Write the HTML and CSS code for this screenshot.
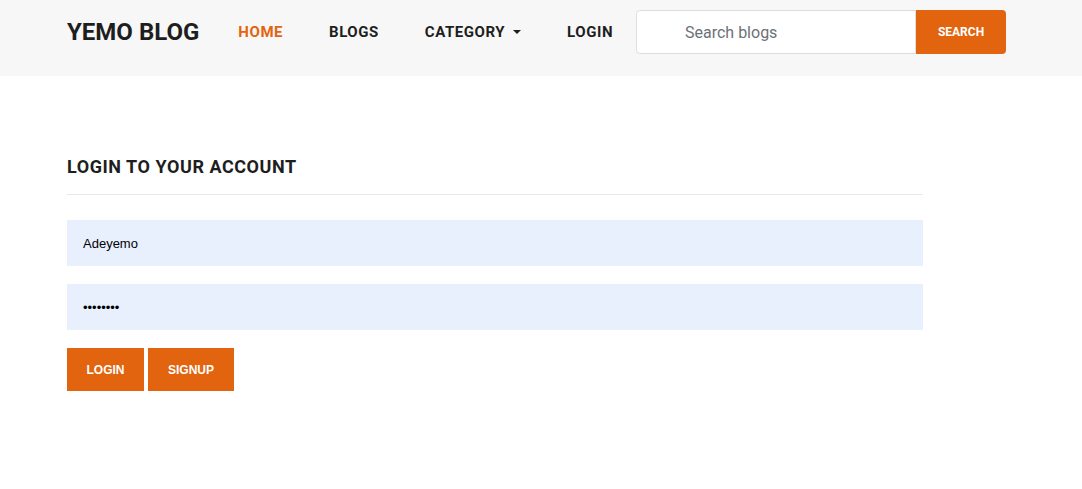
FILE: index.html
```html
<!DOCTYPE html>
<html>
<head>
<meta charset="utf-8">
<link rel="stylesheet" href="styles.css">
</head>
<body>
<header class="topbar">
  <div class="topbar-inner">
    <a class="logo" href="#">YEMO BLOG</a>
    <nav class="nav">
      <a class="nav-link active" href="#">HOME</a>
      <a class="nav-link" href="#">BLOGS</a>
      <a class="nav-link" href="#">CATEGORY <span class="caret"></span></a>
      <a class="nav-link" href="#">LOGIN</a>
    </nav>
    <form class="search">
      <input class="search-input" type="text" placeholder="Search blogs">
      <button class="search-btn" type="button">SEARCH</button>
    </form>
  </div>
</header>
<main class="content">
  <h2 class="title">LOGIN TO YOUR ACCOUNT</h2>
  <div class="rule"></div>
  <form class="login">
    <input class="field" type="text" value="Adeyemo">
    <input class="field" type="password" value="password">
    <div class="actions">
      <button class="btn" type="button">LOGIN</button>
      <button class="btn btn-wide" type="button">SIGNUP</button>
    </div>
  </form>
</main>
</body>
</html>
```
FILE: styles.css
```css
* { box-sizing: border-box; }
body {
  margin: 0;
  font-family: Roboto, "Liberation Sans", sans-serif;
  background: #fff;
  color: #222;
}
.topbar {
  background: #f7f7f7;
  height: 76px;
}
.topbar-inner {
  display: flex;
  align-items: center;
  padding: 10px 0 0 67px;
  height: 54px;
}
.logo {
  font-size: 24px;
  font-weight: 700;
  color: #1e1e1e;
  text-decoration: none;
  margin-right: 16px;
}
.nav { display: flex; align-items: center; }
.nav-link {
  font-size: 15px;
  font-weight: 700;
  color: #1e1e1e;
  text-decoration: none;
  padding: 0 23px;
  letter-spacing: 0.55px;
  display: flex;
  align-items: center;
}
.nav-link.active { color: #e2640f; }
.caret {
  display: inline-block;
  width: 0; height: 0;
  border-left: 4px solid transparent;
  border-right: 4px solid transparent;
  border-top: 4px solid #1e1e1e;
  margin-left: 8px;
}
.search { display: flex; }
.search-input {
  width: 280px;
  height: 44px;
  border: 1px solid #dedede;
  border-radius: 4px 0 0 4px;
  background: #fff;
  padding: 0 0 0 48px;
  font-family: Roboto, sans-serif;
  font-size: 16px;
  outline: none;
}
.search-input::placeholder { color: #6c7177; }
.search-btn {
  width: 90px;
  height: 44px;
  border: none;
  border-radius: 0 4px 4px 0;
  background: #e2640f;
  color: #fff;
  font-family: Roboto, sans-serif;
  font-weight: 700;
  font-size: 12px;
}
.content {
  width: 856px;
  margin-left: 67px;
  padding-top: 81px;
}
.title {
  margin: 0;
  font-size: 18px;
  font-weight: 700;
  color: #1e1e1e;
  letter-spacing: 0.55px;
  line-height: 20px;
}
.rule {
  margin-top: 17px;
  border-top: 1px solid #e8e8e8;
}
.login {
  display: flex;
  flex-direction: column;
  gap: 18px;
  margin-top: 25px;
}
.field {
  height: 46px;
  width: 100%;
  border: none;
  background: #e8f0fe;
  padding: 0 16px;
  font-family: "Liberation Sans", Arial, sans-serif;
  font-size: 13px;
  color: #000;
  outline: none;
}
.actions { display: flex; gap: 4px; }
.btn {
  height: 43px;
  width: 77px;
  border: none;
  background: #e2640f;
  color: #fff;
  font-family: "Liberation Sans", Arial, sans-serif;
  font-weight: 700;
  font-size: 12px;
}
.btn-wide { width: 86px; }
```
